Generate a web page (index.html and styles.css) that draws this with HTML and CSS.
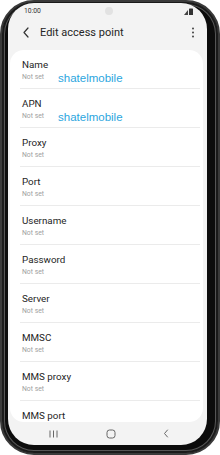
FILE: index.html
```html
<!DOCTYPE html>
<html>
<head>
<meta charset="utf-8">
<link rel="stylesheet" href="styles.css">
</head>
<body>
<div class="phone">
  <div class="screen">
    <div class="camera"></div>
    <div class="status">
      <span class="time">10:00</span>
      <span class="sicons">
        <svg width="10" height="7" viewBox="0 0 10 7"><path d="M0 7 L4 2 L4 7 Z" fill="#444"/><rect x="5" y="0.5" width="4" height="6.5" rx="0.6" fill="#333"/></svg>
      </span>
    </div>
    <div class="header">
      <svg class="back" width="8" height="11" viewBox="0 0 8 11"><path d="M6 1 L2 5.5 L6 10" fill="none" stroke="#333" stroke-width="1.2" stroke-linecap="round" stroke-linejoin="round"/></svg>
      <span class="title">Edit access point</span>
      <svg class="kebab" width="4" height="11" viewBox="0 0 4 11"><circle cx="2" cy="1.5" r="1" fill="#444"/><circle cx="2" cy="5.5" r="1" fill="#444"/><circle cx="2" cy="9.5" r="1" fill="#444"/></svg>
    </div>
    <div class="card">
      <div class="row"><div class="label">Name</div><div class="sub">Not set</div><span class="note">shatelmobile</span></div>
      <div class="row"><div class="label">APN</div><div class="sub">Not set</div><span class="note">shatelmobile</span></div>
      <div class="row"><div class="label">Proxy</div><div class="sub">Not set</div></div>
      <div class="row"><div class="label">Port</div><div class="sub">Not set</div></div>
      <div class="row"><div class="label">Username</div><div class="sub">Not set</div></div>
      <div class="row"><div class="label">Password</div><div class="sub">Not set</div></div>
      <div class="row"><div class="label">Server</div><div class="sub">Not set</div></div>
      <div class="row"><div class="label">MMSC</div><div class="sub">Not set</div></div>
      <div class="row"><div class="label">MMS proxy</div><div class="sub">Not set</div></div>
      <div class="row last"><div class="label">MMS port</div></div>
    </div>
    <div class="nav">
      <svg width="9" height="8" viewBox="0 0 9 8"><path d="M1 0.5 V7.5 M4.5 0.5 V7.5 M8 0.5 V7.5" stroke="#666" stroke-width="1"/></svg>
      <svg width="10" height="10" viewBox="0 0 10 10"><rect x="1" y="1" width="8" height="8" rx="2.5" fill="none" stroke="#666" stroke-width="1"/></svg>
      <svg width="6" height="9" viewBox="0 0 6 9"><path d="M4.5 1 L1.5 4.5 L4.5 8" fill="none" stroke="#666" stroke-width="1" stroke-linecap="round"/></svg>
    </div>
  </div>
</div>
</body>
</html>
```
FILE: styles.css
```css
html, body {
  margin: 0;
  padding: 0;
  background: #ffffff;
}
body {
  width: 220px;
  height: 455px;
  overflow: hidden;
  font-family: Roboto, "Liberation Sans", Arial, sans-serif;
}
.phone {
  box-sizing: border-box;
  width: 220px;
  height: 455px;
  background: #0c0c0c;
  border-radius: 34px;
  border: 2px solid #3a3a3a;
  box-shadow: inset 0 0 0 2px #1a1a1a, inset 0 0 0 3px #555;
  padding: 1px 11px 8px 6px;
  display: flex;
}
.screen {
  position: relative;
  flex: 1;
  background: #f3f3f3;
  border-radius: 26px;
  overflow: hidden;
  display: flex;
  flex-direction: column;
}
.camera {
  position: absolute;
  left: 97px;
  top: 4px;
  width: 8px;
  height: 8px;
  border-radius: 50%;
  background: #e2e2e2;
}
.status {
  height: 16px;
  display: flex;
  align-items: center;
  justify-content: space-between;
  padding: 0 13px 0 16px;
}
.time {
  font-size: 6.8px;
  color: #333;
}
.sicons {
  display: flex;
  align-items: center;
}
.header {
  height: 26px;
  display: flex;
  align-items: center;
  padding: 0 12px 0 14px;
}
.back {
  margin-right: 10px;
}
.title {
  flex: 1;
  font-size: 11px;
  color: #252525;
}
.card {
  margin: 5px 4px 0 2px;
  flex: 1;
  background: #ffffff;
  border-radius: 14px;
  overflow: hidden;
}
.row {
  position: relative;
  height: 39px;
  margin: 0 3px 0 10px;
  padding: 9px 0 0 2px;
  box-sizing: border-box;
  border-bottom: 1px solid #ebebeb;
}
.row.last {
  border-bottom: none;
}
.label {
  font-size: 9.8px;
  line-height: 12px;
  color: #252525;
}
.sub {
  margin-top: 2px;
  font-size: 6.8px;
  line-height: 8px;
  color: #a0a0a0;
}
.note {
  position: absolute;
  left: 38px;
  top: 21px;
  font-family: "Liberation Sans", Arial, sans-serif;
  font-size: 11.5px;
  line-height: 14px;
  color: #2ba6de;
}
.nav {
  height: 23px;
  display: flex;
  align-items: center;
  justify-content: space-between;
  padding: 0 38px 0 41px;
}
```
